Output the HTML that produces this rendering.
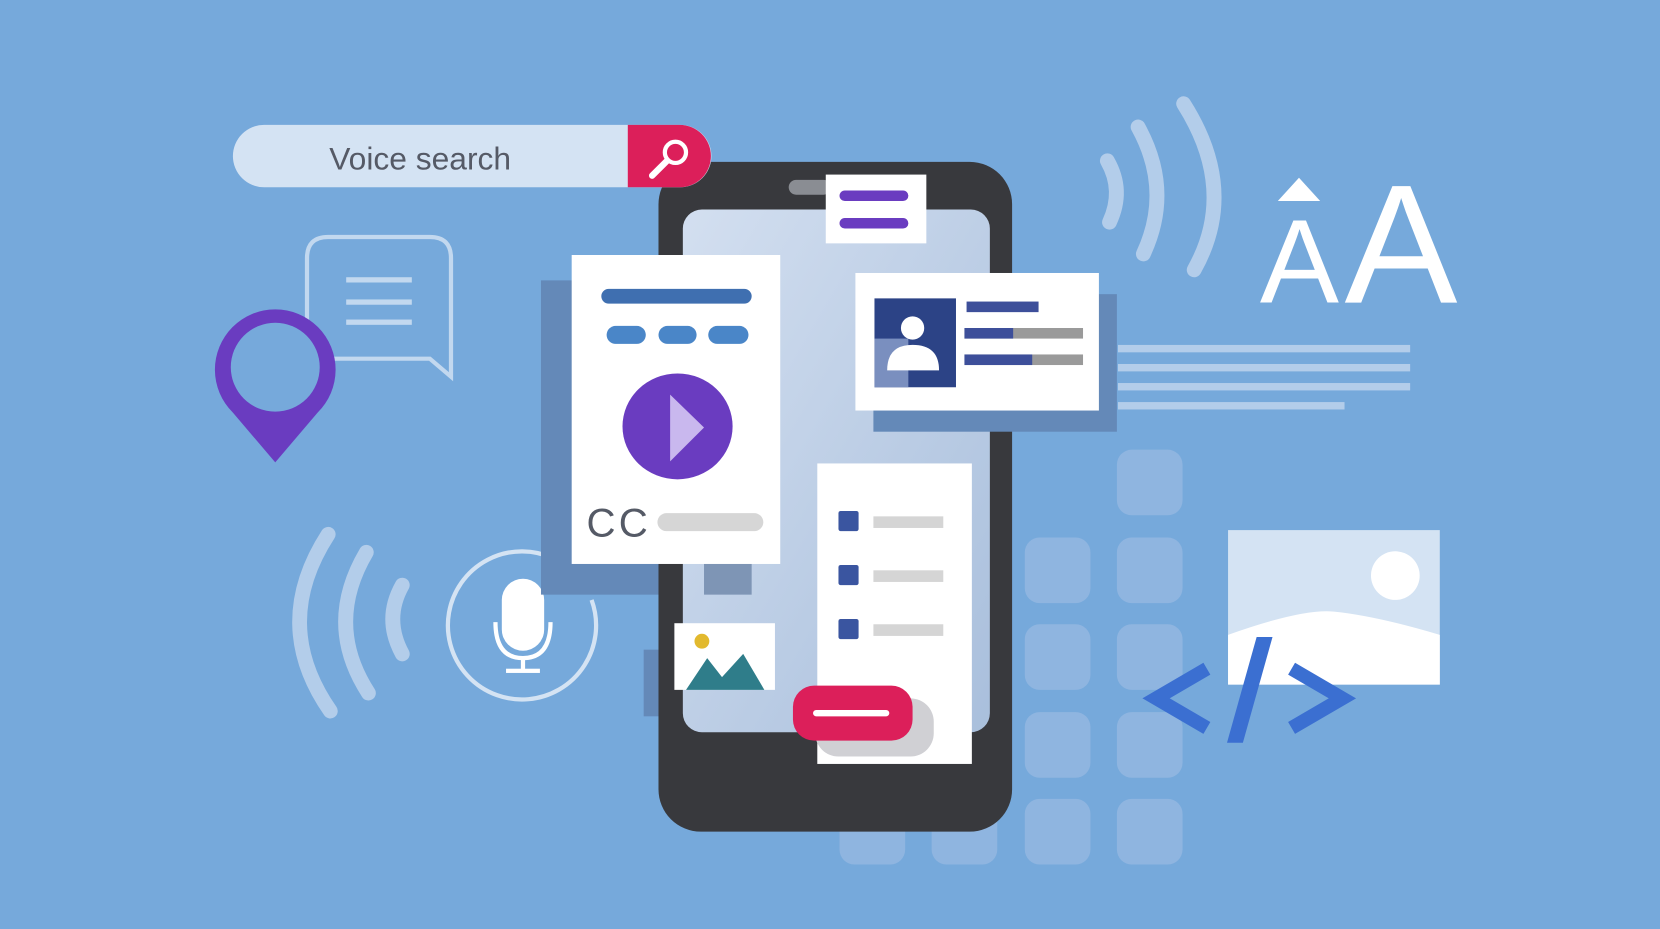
<!DOCTYPE html>
<html><head><meta charset="utf-8"><style>
html,body{margin:0;padding:0;background:#76a9db;overflow:hidden}
svg{display:block}
</style></head><body>
<svg width="1660" height="929" viewBox="0 0 1568 878" preserveAspectRatio="none" xmlns="http://www.w3.org/2000/svg">
<defs>
<linearGradient id="scr" x1="0" y1="0" x2="1" y2="1">
<stop offset="0" stop-color="#d3dff0"/><stop offset="1" stop-color="#a9bfdc"/>
</linearGradient>
</defs>
<rect width="1568" height="878" fill="#76a9db"/>
<g fill="#8fb5e0">
<rect x="1055" y="425" width="62" height="62" rx="14"/>
<rect x="968" y="508" width="62" height="62" rx="14"/><rect x="1055" y="508" width="62" height="62" rx="14"/>
<rect x="968" y="590" width="62" height="62" rx="14"/><rect x="1055" y="590" width="62" height="62" rx="14"/>
<rect x="968" y="673" width="62" height="62" rx="14"/><rect x="1055" y="673" width="62" height="62" rx="14"/>
<rect x="968" y="755" width="62" height="62" rx="14"/><rect x="1055" y="755" width="62" height="62" rx="14"/>
<rect x="793" y="755" width="62" height="62" rx="14"/><rect x="880" y="755" width="62" height="62" rx="14"/>
</g>
<g fill="#b3cdea">
<rect x="1056" y="326" width="276" height="7"/><rect x="1056" y="344" width="276" height="7"/>
<rect x="1056" y="362" width="276" height="7"/><rect x="1056" y="380" width="214" height="7"/>
</g>
<g fill="none" stroke="#b3cdea" stroke-width="14" stroke-linecap="round">
<path d="M1046 152 Q1062 180 1048 210"/>
<path d="M1075 120 Q1108 180 1080 240"/>
<path d="M1118 98 Q1170 180 1128 255"/>
<path d="M310 505 Q255 590 312 672"/>
<path d="M346 522 Q306 590 348 655"/>
<path d="M380 553 Q362 585 380 618"/>
</g>
<text x="1190" y="286" font-family="Liberation Sans,sans-serif" font-size="112" fill="#fff">A</text>
<text x="1270" y="286" font-family="Liberation Sans,sans-serif" font-size="160" fill="#fff">A</text>
<path d="M1227 168 L1207 190 L1247 190 Z" fill="#fff"/>
<path d="M310 224 H406 Q426 224 426 244 V356 L406 339 H310 Q290 339 290 319 V244 Q290 224 310 224 Z" fill="none" stroke="#c2d8ef" stroke-width="4"/>
<g fill="#c2d8ef"><rect x="327" y="262" width="62" height="5"/><rect x="327" y="283" width="62" height="5"/><rect x="327" y="302" width="62" height="5"/></g>
<path d="M260 437 L220 390 A57 57 0 1 1 300 390 Z" fill="#6a3cc0"/>
<circle cx="260" cy="347" r="42" fill="#76a9db"/>
<path d="M558.8 567 A70 70 0 1 1 522.6 527.6" fill="none" stroke="#d4e3f3" stroke-width="4"/>
<rect x="540" y="543" width="6" height="6" fill="#d4e3f3"/>
<rect x="553" y="556" width="5" height="5" fill="#d4e3f3"/>
<rect x="474" y="547" width="40" height="68" rx="20" fill="#fff"/>
<path d="M468 588 Q468 622 494 622 Q520 622 520 588" fill="none" stroke="#fff" stroke-width="4"/>
<rect x="492" y="622" width="4" height="12" fill="#fff"/><rect x="478" y="632" width="32" height="4" fill="#fff"/>
<rect x="511" y="265" width="200" height="297" fill="#6489b8"/>
<rect x="608" y="614" width="20" height="63" fill="#6489b8"/>
<rect x="622" y="153" width="334" height="633" rx="40" fill="#38393d"/>
<rect x="645" y="198" width="290" height="494" rx="18" fill="url(#scr)"/>
<rect x="745" y="170" width="40" height="14" rx="7" fill="#8a8d93"/>
<rect x="825" y="278" width="230" height="130" fill="#6489b8"/>
<rect x="665" y="532" width="45" height="30" fill="#7e95b5"/>
<rect x="220" y="118" width="452" height="59" rx="29.5" fill="#d4e3f3"/>
<path d="M593 118 H642 A29.5 29.5 0 0 1 642 177 H593 Z" fill="#dc1f5a"/>
<text x="311" y="160" font-family="Liberation Sans,sans-serif" font-size="30" fill="#555a66">Voice search</text>
<circle cx="638" cy="144" r="10" fill="none" stroke="#fff" stroke-width="4"/>
<line x1="630" y1="152" x2="616" y2="166" stroke="#fff" stroke-width="6" stroke-linecap="round"/>
<rect x="780" y="165" width="95" height="65" fill="#fff"/>
<rect x="793" y="180" width="65" height="10" rx="5" fill="#6a3cc0"/>
<rect x="793" y="206" width="65" height="10" rx="5" fill="#6a3cc0"/>
<rect x="540" y="241" width="197" height="292" fill="#fff"/>
<rect x="568" y="273" width="142" height="14" rx="7" fill="#3f6fb0"/>
<g fill="#4a86c8"><rect x="573" y="308" width="37" height="17" rx="8.5"/><rect x="622" y="308" width="36" height="17" rx="8.5"/><rect x="669" y="308" width="38" height="17" rx="8.5"/></g>
<ellipse cx="640" cy="403" rx="52" ry="50" fill="#6a3cc0"/>
<path d="M633 373 L665 404 L633 436 Z" fill="#c9b8ee"/>
<text x="554" y="507" font-family="Liberation Sans,sans-serif" font-size="38" fill="#555a66" letter-spacing="3">CC</text>
<rect x="621" y="485" width="100" height="17" rx="8.5" fill="#d6d6d6"/>
<rect x="808" y="258" width="230" height="130" fill="#fff"/>
<rect x="826" y="282" width="77" height="84" fill="#2c4386"/>
<rect x="826" y="320" width="32" height="46" fill="#7a8fbf"/>
<circle cx="862" cy="310" r="11" fill="#fff"/>
<path d="M838 350 Q838 326 862 326 Q887 326 887 350 Z" fill="#fff"/>
<rect x="913" y="285" width="68" height="10" fill="#3d4f9a"/>
<rect x="911" y="310" width="112" height="10" fill="#9a9a9a"/><rect x="911" y="310" width="46" height="10" fill="#3d4f9a"/>
<rect x="911" y="335" width="112" height="10" fill="#9a9a9a"/><rect x="911" y="335" width="64" height="10" fill="#3d4f9a"/>
<rect x="772" y="438" width="146" height="284" fill="#fff"/>
<g fill="#3a55a0"><rect x="792" y="483" width="19" height="19" rx="2"/><rect x="792" y="534" width="19" height="19" rx="2"/><rect x="792" y="585" width="19" height="19" rx="2"/></g>
<g fill="#d5d5d5"><rect x="825" y="488" width="66" height="11"/><rect x="825" y="539" width="66" height="11"/><rect x="825" y="590" width="66" height="11"/></g>
<rect x="770" y="660" width="112" height="55" rx="22" fill="#d0d0d4"/>
<rect x="749" y="648" width="113" height="52" rx="20" fill="#dc1f5a"/>
<rect x="768" y="671" width="72" height="6" rx="3" fill="#fff"/>
<rect x="637" y="589" width="95" height="63" fill="#fff"/>
<circle cx="663" cy="606" r="7" fill="#e2b92e"/>
<path d="M648 652 L668 622 L682 640 L702 618 L722 652 Z" fill="#2f7d8a"/>
<rect x="1160" y="501" width="200" height="146" fill="#d4e3f3"/>
<path d="M1160 600 Q1230 575 1260 578 Q1300 582 1360 600 V647 H1160 Z" fill="#fff"/>
<circle cx="1318" cy="544" r="23" fill="#fff"/>
<g fill="none" stroke="#3b6fd1" stroke-width="13">
<path d="M1140 632 L1092 660 L1140 688"/>
<path d="M1220 632 L1268 660 L1220 688"/>
</g>
<path d="M1187 602 L1202 602 L1174 702 L1159 702 Z" fill="#3b6fd1"/>
</svg>
</body></html>
